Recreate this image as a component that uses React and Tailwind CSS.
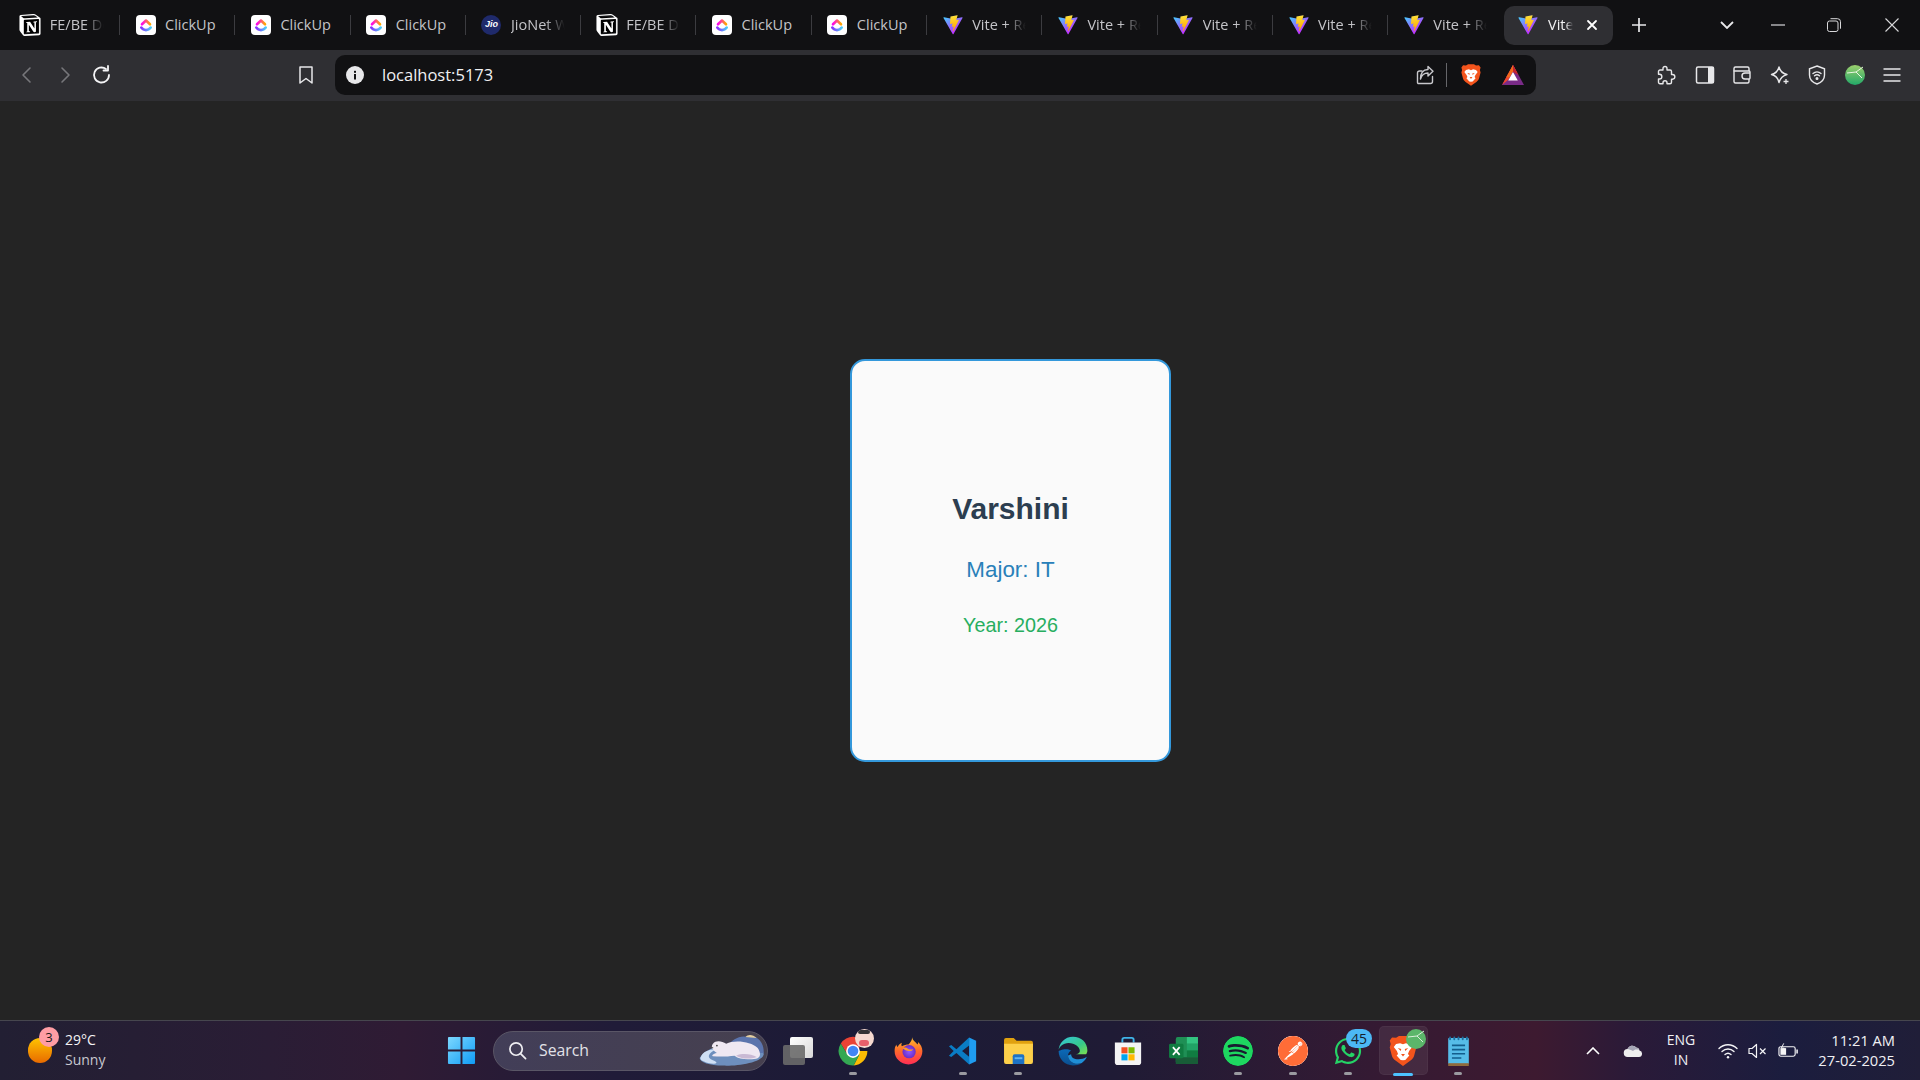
import React from "react";
import { SiNotion, SiSpotify, SiPostman } from "react-icons/si";
import { FaWhatsapp } from "react-icons/fa";

const uiFont = "font-['Open_Sans','Noto_Sans',sans-serif]";

function Vite({ id }) {
  return (
    <svg viewBox="0 0 410 404" className="w-5 h-5 shrink-0">
      <defs>
        <linearGradient id={id + "a"} x1="6" y1="33" x2="235" y2="344" gradientUnits="userSpaceOnUse">
          <stop stopColor="#41D1FF" />
          <stop offset="1" stopColor="#BD34FE" />
        </linearGradient>
        <linearGradient id={id + "b"} x1="194.65" y1="8.8" x2="236.08" y2="292.99" gradientUnits="userSpaceOnUse">
          <stop stopColor="#FFEA83" />
          <stop offset="0.083" stopColor="#FFDD35" />
          <stop offset="1" stopColor="#FFA800" />
        </linearGradient>
      </defs>
      <path d="M399.641 59.5246L215.643 388.545C211.844 395.338 202.084 395.378 198.228 388.618L10.5817 59.5563C6.38087 52.1896 12.6802 43.2665 21.0281 44.7586L205.223 77.6824C206.398 77.8924 207.601 77.8904 208.776 77.6763L389.119 44.8058C397.439 43.2894 403.768 52.1434 399.641 59.5246Z" fill={`url(#${id}a)`} />
      <path d="M292.965 1.5744L156.801 28.2552C154.563 28.6937 152.906 30.5903 152.771 32.8664L144.395 174.33C144.198 177.662 147.258 180.248 150.51 179.498L188.42 170.749C191.967 169.931 195.172 173.055 194.443 176.622L183.18 231.775C182.422 235.487 185.907 238.661 189.532 237.56L212.947 230.446C216.577 229.344 220.065 232.527 219.297 236.242L201.398 322.875C200.278 328.294 207.486 331.249 210.492 326.603L212.5 323.5L323.454 102.072C325.312 98.3645 322.108 94.137 318.036 94.9228L279.014 102.454C275.347 103.161 272.227 99.746 273.262 96.1583L298.731 7.86689C299.767 4.27314 296.636 0.855181 292.965 1.5744Z" fill={`url(#${id}b)`} />
    </svg>
  );
}

function ClickUp({ id }) {
  return (
    <svg viewBox="0 0 20 20" className="w-5 h-5 shrink-0">
      <defs>
        <linearGradient id={id + "t"} x1="0" y1="0" x2="1" y2="0">
          <stop stopColor="#ff02f0" />
          <stop offset="1" stopColor="#ffa800" />
        </linearGradient>
        <linearGradient id={id + "u"} x1="0" y1="0" x2="1" y2="0">
          <stop stopColor="#8930fd" />
          <stop offset="1" stopColor="#49ccf9" />
        </linearGradient>
      </defs>
      <rect width="20" height="20" rx="4" fill="#fff" />
      <path d="M6 9.300 10 5.500l4 3.800" fill="none" stroke={`url(#${id}t)`} strokeWidth="2.600" strokeLinecap="round" strokeLinejoin="round" />
      <path d="M5.300 12.600c1.200 1.700 2.800 2.500 4.700 2.500s3.500-.8 4.700-2.500" fill="none" stroke={`url(#${id}u)`} strokeWidth="2.600" strokeLinecap="round" />
    </svg>
  );
}

function Notion() {
  return (
    <span className="relative w-5 h-5 shrink-0 block">
      <span className="absolute left-[2px] top-[2px] w-[16px] h-[16px] bg-black rounded-[2px]" />
      <SiNotion className="absolute -left-[1px] -top-[1px] w-[22px] h-[22px] text-white" />
    </span>
  );
}

function Jio() {
  return (
    <span className="w-5 h-5 shrink-0 rounded-full bg-[#1f2a6b] flex items-center justify-center text-[9px] font-bold italic text-white font-['Liberation_Sans',sans-serif]">
      Jio
    </span>
  );
}

const tabs = [
  ["n", "FE/BE Dev Notes"],
  ["c", "ClickUp"],
  ["c", "ClickUp"],
  ["c", "ClickUp"],
  ["j", "JioNet Wi-Fi"],
  ["n", "FE/BE Dev Notes"],
  ["c", "ClickUp"],
  ["c", "ClickUp"],
  ["v", "Vite + React"],
  ["v", "Vite + React"],
  ["v", "Vite + React"],
  ["v", "Vite + React"],
  ["v", "Vite + React"],
];

function TabIcon({ kind, id }) {
  if (kind === "n") return <Notion />;
  if (kind === "c") return <ClickUp id={id} />;
  if (kind === "j") return <Jio />;
  return <Vite id={id} />;
}

function Tab({ kind, title, id, last }) {
  const titleClass =
    kind === "c"
      ? "ml-[9.5px] w-[56px] overflow-hidden whitespace-nowrap text-[14.5px] text-[#c4c4c8]"
      : "ml-[9.5px] w-[55px] overflow-hidden whitespace-nowrap text-[14.5px] text-[#c4c4c8] [mask-image:linear-gradient(to_right,black_62%,transparent_98%)]";
  return (
    <div className="w-[115.3px] h-[20px] shrink-0 flex items-center pl-[15.6px] relative">
      <TabIcon kind={kind} id={id} />
      <span className={titleClass}>{title}</span>
      {!last && <span className="absolute right-0 top-0 h-[20px] w-px bg-[#3c3c40]" />}
    </div>
  );
}

function TabBar() {
  return (
    <div className="h-[50px] bg-[#111113] flex items-center pl-[4.7px] shrink-0">
      {tabs.map((t, i) => (
        <Tab key={i} kind={t[0]} title={t[1]} id={"tab" + i} last={i === 12} />
      ))}
      <div className="w-[109px] h-[39px] rounded-[10px] bg-[#2f2f33] flex items-center pl-[14.5px] shrink-0">
        <Vite id="active" />
        <span className="ml-[10px] w-[25px] overflow-hidden whitespace-nowrap text-[14.5px] text-[#f0f0f2] [mask-image:linear-gradient(to_right,black_70%,transparent_100%)]">
          Vite + React
        </span>
        <svg viewBox="0 0 12 12" className="w-3 h-3 ml-[13px]" fill="none" stroke="#fff" strokeWidth="1.800" strokeLinecap="round">
          <path d="M2 2l8 8M10 2l-8 8" />
        </svg>
      </div>
      <svg viewBox="0 0 14 14" className="w-[14px] h-[14px] ml-[19.5px]" fill="none" stroke="#e8e8ea" strokeWidth="1.700">
        <path d="M7 0v14M0 7h14" />
      </svg>
      <svg viewBox="0 0 14 8" className="w-[14px] h-[8px] ml-[74px]" fill="none" stroke="#e8e8ea" strokeWidth="1.800">
        <path d="M1 1l6 6 6-6" />
      </svg>
      <svg viewBox="0 0 14 2" className="w-[14px] h-[2px] ml-[37px]" fill="none" stroke="#d8d8da" strokeWidth="1.200">
        <path d="M0 1h14" />
      </svg>
      <svg viewBox="0 0 14 14" className="w-[14px] h-[14px] ml-[42px]" fill="none" stroke="#d8d8da" strokeWidth="1">
        <rect x="0.500" y="3" width="10.500" height="10.500" rx="2" />
        <path d="M3.500 0.700h7a3 3 0 0 1 3 3v7" />
      </svg>
      <svg viewBox="0 0 14 14" className="w-[14px] h-[14px] ml-[44px]" fill="none" stroke="#d8d8da" strokeWidth="1.100">
        <path d="M0.500 0.500l13 13M13.500 0.500l-13 13" />
      </svg>
    </div>
  );
}

function BraveLion({ w = 20, h = 22 }) {
  return (
    <svg viewBox="0 0 24 26" className="block shrink-0" style={{ width: w, height: h }}>
      <path d="M6 1.500 8.500 0h7L18 1.500l3.500-.3L23.500 4l-.8 3 .8 3-1.800 7c-.5 1.900-1.500 3.200-3.200 4.300L12 26l-6.500-4.700c-1.700-1.100-2.700-2.400-3.200-4.300L.5 10l.8-3-.8-3L2.500 1.200z" fill="#f3541c" />
      <path d="M6 7l3.500-.8L12 7.200l2.500-1 3.500.8 2 2.500-2.700 3.500-1 2.500 1.200 1.500-3.500 3.700L12 21l-2 -.3-3.500-3.700 1.200-1.500-1-2.500L4 9.500z" fill="#fff" />
      <path d="M7.500 10.500l3 .8-.5 1.700zM16.500 10.500l-3 .8.500 1.700zM10.300 15.500h3.400L12 17.800z" fill="#f3541c" />
    </svg>
  );
}

function Bat() {
  return (
    <svg viewBox="0 0 22 20" className="w-[22px] h-[20px] shrink-0">
      <path d="M11 0 22 20H0z" fill="#7a2b88" />
      <path d="M11 0 15.500 8.200 11 6 6.500 14.500 0 20z" fill="#f0452a" />
      <path d="M11 0 4.300 12.200H7.500L11 6.200z" fill="#f26a1b" />
      <path d="M11 7 15.800 15.600H6.200z" fill="#fff" />
      <path d="M11 0l5.500 10L11 7z" fill="#c4262e" />
    </svg>
  );
}

function ToolBar() {
  return (
    <div className="h-[51px] bg-[#2f2f33] flex items-start pt-[5px] shrink-0">
      <div className="h-[40px] flex items-center shrink-0">
        <svg viewBox="0 0 20 20" className="w-5 h-5 ml-[17px]" fill="none" stroke="#77777b" strokeWidth="1.600" strokeLinecap="round" strokeLinejoin="round">
          <path d="M13 3 6 10l7 7" />
        </svg>
        <svg viewBox="0 0 20 20" className="w-5 h-5 ml-[18px]" fill="none" stroke="#77777b" strokeWidth="1.600" strokeLinecap="round" strokeLinejoin="round">
          <path d="M7 3l7 7-7 7" />
        </svg>
        <svg viewBox="0 0 20 20" className="w-5 h-5 ml-[17px]" fill="none" stroke="#f4f4f6" strokeWidth="1.800" strokeLinecap="round">
          <path d="M17 10a7.500 7.500 0 1 1-3-6" />
          <path d="M16 1v4.500h-4.500" fill="none" strokeLinejoin="round" />
        </svg>
        <svg viewBox="0 0 16 20" className="w-4 h-5 ml-[186px]" fill="none" stroke="#e8e8ea" strokeWidth="1.500" strokeLinejoin="round">
          <path d="M2 2h12v16l-6-4.500L2 18z" />
        </svg>
      </div>
      <div className="ml-[21px] w-[1201px] h-[40px] rounded-[10px] bg-[#111113] flex items-center pl-[11px] pr-[12px] shrink-0">
        <span className="w-[18px] h-[18px] rounded-full bg-[#e8e8ea] text-[#111113] flex items-center justify-center">
          <svg viewBox="0 0 18 18" className="w-[18px] h-[18px]" fill="#111113">
            <rect x="8" y="8" width="2" height="5.500" />
            <rect x="8" y="4.800" width="2" height="2" />
          </svg>
        </span>
        <span className="ml-[18px] text-[16.5px] text-[#f0f0f2]">localhost:5173</span>
        <svg viewBox="0 0 20 20" className="w-5 h-5 ml-auto" fill="none" stroke="#c8c8cc" strokeWidth="1.400" strokeLinecap="round" strokeLinejoin="round">
          <path d="M17.500 11.500v5a2 2 0 0 1-2 2H3.500a1 1 0 0 1-1-1V8a2 2 0 0 1 2-2H7" />
          <path d="M13 1.500l5 4.700-5 4.800V8c-4.500 0-6.500 2.500-7.500 6 0-6 2.500-9.500 7.500-9.500z" />
        </svg>
        <span className="ml-[11px] w-px h-[24px] bg-[#66666a]" />
        <span className="ml-[14px]"><BraveLion /></span>
        <span className="ml-[21px]"><Bat /></span>
      </div>
      <div className="h-[40px] flex items-center gap-[17.500px] ml-[121px] shrink-0">
        <svg viewBox="0 0 20 20" className="w-5 h-5" fill="none" stroke="#e8e8ea" strokeWidth="1.400" strokeLinejoin="round">
          <path d="M8 1.500a2 2 0 0 1 2 2V5h3a1.500 1.500 0 0 1 1.500 1.500v3h1a2.300 2.300 0 0 1 0 4.700h-1v3a1.500 1.500 0 0 1-1.500 1.500h-3v-1a2 2 0 0 0-4 0v1H3a1.500 1.500 0 0 1-1.500-1.500V14h1a2.300 2.300 0 0 0 0-4.700h-1V6.500A1.500 1.500 0 0 1 3 5h3V3.500a2 2 0 0 1 2-2z" />
        </svg>
        <svg viewBox="0 0 20 20" className="w-5 h-5">
          <rect x="1.500" y="2" width="17" height="16" rx="1.500" fill="none" stroke="#e8e8ea" strokeWidth="1.500" />
          <rect x="13" y="2" width="6" height="16" fill="#e8e8ea" />
        </svg>
        <svg viewBox="0 0 20 20" className="w-5 h-5" fill="none" stroke="#e8e8ea" strokeWidth="1.400" strokeLinejoin="round">
          <path d="M17 6V3.500a1.500 1.500 0 0 0-1.500-1.500H3.500A1.500 1.500 0 0 0 2 3.500v13A1.500 1.500 0 0 0 3.500 18h12a1.500 1.500 0 0 0 1.500-1.500V14" />
          <path d="M2 5.500c0 .3.500.500 1 .500h14a1 1 0 0 1 1 1v6a1 1 0 0 1-1 1h-4a3 3 0 0 1 0-6h5" />
        </svg>
        <svg viewBox="0 0 20 20" className="w-5 h-5" fill="none" stroke="#e8e8ea" strokeWidth="1.400" strokeLinejoin="round">
          <path d="M9 2c1 4 3 6.500 8 7.500-4 1-6.500 3-8 8-1-4.500-3-7-7.500-8C6 8.500 8 6 9 2z" />
          <path d="M16 14v5M13.500 16.500h5" stroke="#e8e8ea" strokeWidth="1.300" />
        </svg>
        <svg viewBox="0 0 20 20" className="w-5 h-5" fill="none" stroke="#e8e8ea" strokeWidth="1.400" strokeLinecap="round">
          <path d="M10 1l7.500 2.800V10c0 4.500-3.300 7.500-7.500 9-4.200-1.500-7.500-4.500-7.500-9V3.800z" />
          <path d="M6 8.500c2.300-2 5.700-2 8 0M7.500 10.800c1.500-1.200 3.500-1.200 5 0" />
          <circle cx="10" cy="13.500" r=".8" fill="#e8e8ea" />
        </svg>
        <svg viewBox="0 0 20 20" className="w-5 h-5">
          <defs>
            <linearGradient id="glb" x1="0" y1="0" x2="0" y2="1">
              <stop stopColor="#9ccf6e" />
              <stop offset="1" stopColor="#22a868" />
            </linearGradient>
          </defs>
          <circle cx="10" cy="10" r="10" fill="url(#glb)" />
          <path d="M2 8l9-1 7-5M11 7l6 6" fill="none" stroke="#e8f5e0" strokeWidth="1" />
        </svg>
        <svg viewBox="0 0 20 20" className="w-5 h-5" fill="none" stroke="#e8e8ea" strokeWidth="1.600">
          <path d="M1.500 4h17M1.500 10h17M1.500 16h17" />
        </svg>
      </div>
    </div>
  );
}

function Card() {
  return (
    <div className="ml-[101px] w-[321px] h-[403px] rounded-[15px] border-2 border-[#3498db] bg-[#fafafa] flex flex-col items-center justify-center pt-[7px] text-center font-['Liberation_Sans',Arial,sans-serif]">
      <h2 className="text-[30px] leading-[34px] font-bold text-[#2c3e50]">Varshini</h2>
      <p className="mt-[31.5px] text-[22.400px] leading-[26px] text-[#2980b9]">Major: IT</p>
      <p className="mt-[31px] text-[19.800px] leading-[22px] text-[#27ae60]">Year: 2026</p>
    </div>
  );
}

function Dot({ active }) {
  return active ? (
    <span className="absolute bottom-[5px] left-1/2 -translate-x-1/2 w-[20px] h-[3px] rounded-full bg-[#4cc2ff]" />
  ) : (
    <span className="absolute bottom-[6px] left-1/2 -translate-x-1/2 w-[8px] h-[3px] rounded-full bg-[#9a9aa0]" />
  );
}

function Slot({ children, dot, active }) {
  return (
    <div className="relative w-[55px] h-[60px] shrink-0 flex items-center justify-center">
      {active && <span className="absolute left-[3px] top-[5px] w-[49px] h-[49px] rounded-[5px] bg-white/[0.07] border border-white/[0.04]" />}
      <span className="relative">{children}</span>
      {dot && <Dot active={active} />}
    </div>
  );
}

function Chrome() {
  return (
    <span className="relative block w-[30px] h-[30px]">
      <svg viewBox="0 0 48 48" className="w-[30px] h-[30px]">
        <path d="M24 24 43.900 13A23 23 0 0 0 4.500 11.800L14 28z" fill="#ea4335" />
        <path d="M24 24H47a23 23 0 0 1-22 23L34 30z" fill="#fbbc04" />
        <path d="M24 47A23 23 0 0 1 4.500 11.800L14 28l10-4 10 6-9 17z" fill="#34a853" />
        <circle cx="24" cy="24" r="11" fill="#fff" />
        <circle cx="24" cy="24" r="8.500" fill="#4285f4" />
      </svg>
      <span className="absolute -right-[6px] -top-[7px] w-[19px] h-[19px] rounded-full bg-[#f5d9cf] overflow-hidden">
        <span className="absolute left-[3px] top-[1px] w-[12px] h-[4px] rounded-full bg-[#333]" />
        <span className="absolute left-[4px] bottom-[2px] w-[10px] h-[6px] rounded-sm bg-[#e8606b]" />
      </span>
    </span>
  );
}

function Firefox() {
  return (
    <svg viewBox="0 0 48 48" className="w-[29px] h-[29px]">
      <defs>
        <linearGradient id="ff1" x1="0" y1="0" x2="0" y2="1">
          <stop stopColor="#ffbd2e" />
          <stop offset=".5" stopColor="#ff6a2b" />
          <stop offset="1" stopColor="#ff2d55" />
        </linearGradient>
        <radialGradient id="ff2">
          <stop stopColor="#9059ff" />
          <stop offset="1" stopColor="#6b2dc5" />
        </radialGradient>
      </defs>
      <path d="M30 2c1 6 5 7 9 12 1-1 1-3 1-4 4 4 7 9 7 15 0 12-10 22-23 22S1 37 1 25c0-5 1-8 3-11 0 2 1 3 2 4 1-3 4-6 7-7-1 3-1 4 0 6 3-2 8-3 11-3 3-3 6-7 6-12z" fill="url(#ff1)" />
      <circle cx="25" cy="26" r="11" fill="url(#ff2)" />
      <path d="M14 20c3-2 7-1 9 1s7 2 9 0c-1 3-4 4-7 4-4 0-8-2-11-5z" fill="#ff9a2e" />
    </svg>
  );
}

function VsCode() {
  return (
    <svg viewBox="0 0 32 32" className="w-[30px] h-[30px]">
      <path d="M22.500 1.500V10L15 16l7.500 6v8.500L9 18l-5.500 4.500L1 21l5-5-5-5 2.500-1.500L9 14z" fill="#0a7cc4" />
      <path d="M22.500 1.500 30 5v22l-7.500 3.500z" fill="#1f9cf0" />
    </svg>
  );
}

function Explorer() {
  return (
    <svg viewBox="0 0 32 28" className="w-[31px] h-[27px]">
      <path d="M1 3a2 2 0 0 1 2-2h8l3 3h15a2 2 0 0 1 2 2v4H1z" fill="#e0a10f" />
      <path d="M1 7h30v19a2 2 0 0 1-2 2H3a2 2 0 0 1-2-2z" fill="#fdd04a" />
      <path d="M10 20a2 2 0 0 1 2-2h8a2 2 0 0 1 2 2v8H10z" fill="#1d72c4" />
      <rect x="12" y="21" width="8" height="2" fill="#62b5ef" />
    </svg>
  );
}

function Edge() {
  return (
    <svg viewBox="0 0 48 48" className="w-[30px] h-[30px]">
      <defs>
        <linearGradient id="ed1" x1="0" y1="0" x2="1" y2="1">
          <stop stopColor="#36c4dd" />
          <stop offset=".6" stopColor="#36c98a" />
          <stop offset="1" stopColor="#7ee04f" />
        </linearGradient>
        <linearGradient id="ed2" x1="0" y1="0" x2="0" y2="1">
          <stop stopColor="#0c6ab8" />
          <stop offset="1" stopColor="#0a4f8f" />
        </linearGradient>
      </defs>
      <path d="M24 1C11 1 1 11 1 24c0-7 7-13 16-13 10 0 18 6 18 13 0 3-3 5-7 5h17c1-2 2-3 2-6C47 10 37 1 24 1z" fill="url(#ed1)" />
      <path d="M1 24c0 13 10 23 23 23 5 0 10-1 14-4-10 4-22-2-22-12 0-3 2-6 5-8-9-5-20 1-20 1z" fill="url(#ed2)" />
      <path d="M16 31c0 10 12 16 22 12 4-3 7-6 8-10-4 3-9 4-13 4-8 0-12-3-12-8z" fill="#1f8fd6" />
    </svg>
  );
}

function Store() {
  return (
    <svg viewBox="0 0 32 32" className="w-[30px] h-[30px]">
      <path d="M10 7V4a2 2 0 0 1 2-2h8a2 2 0 0 1 2 2v3" fill="none" stroke="#3fb4e8" strokeWidth="2" />
      <path d="M2 7h28v21a3 3 0 0 1-3 3H5a3 3 0 0 1-3-3z" fill="#f4f4f4" />
      <rect x="9" y="12" width="6.500" height="6.500" fill="#f25022" />
      <rect x="16.500" y="12" width="6.500" height="6.500" fill="#7fba00" />
      <rect x="9" y="19.500" width="6.500" height="6.500" fill="#00a4ef" />
      <rect x="16.500" y="19.500" width="6.500" height="6.500" fill="#ffb900" />
    </svg>
  );
}

function Excel() {
  return (
    <svg viewBox="0 0 30 28" className="w-[29px] h-[27px]">
      <rect x="7" y="0" width="23" height="28" rx="2" fill="#1f8f55" />
      <rect x="18.500" y="0" width="11.500" height="7" fill="#33c481" />
      <rect x="18.500" y="7" width="11.500" height="7" fill="#21a366" />
      <rect x="18.500" y="14" width="11.500" height="7" fill="#107c41" />
      <rect x="7" y="21" width="23" height="7" fill="#185c37" />
      <rect x="0" y="7" width="15" height="15" rx="1.500" fill="#107c41" />
      <path d="M4 10.500l7 8M11 10.500l-7 8" stroke="#fff" strokeWidth="1.800" />
    </svg>
  );
}

function Notepad() {
  return (
    <svg viewBox="0 0 24 32" className="w-[23px] h-[30px]">
      <rect x="1" y="2" width="22" height="28" rx="1" fill="#56bce8" />
      <rect x="1" y="29" width="22" height="3" fill="#8f6a3d" />
      <path d="M3 1.500v2M7.500 1.500v2M12 1.500v2M16.500 1.500v2M21 1.500v2" stroke="#1e6f9f" strokeWidth="2" strokeLinecap="round" />
      <path d="M5 10h14M5 14.500h14M5 19h14M5 23.500h10" stroke="#135d8c" strokeWidth="1.700" />
    </svg>
  );
}

function Bear() {
  return (
    <svg viewBox="15 30 205 105" className="w-[68px] h-[35px] shrink-0">
      <path d="M20 105C40 70 100 60 150 70c40 5 65 10 63 25-8 25-83 35-123 33-40 0-70-10-70-23z" fill="#6e8fbd" />
      <path d="M100 70c20-20 40-35 65-28 25-7 50 13 48 48l-63 0z" fill="#5b74ad" />
      <path d="M158 42c7-9 22-9 34 3z" fill="#e5cfa0" />
      <path d="M22 105c8-25 38-27 48-25-25 8-30 25-10 32 25 10 0 13-15 8-15-5-23-8-23-15z" fill="#cfe0f5" />
      <path d="M60 62c10-12 28-7 40 0 25-12 75-7 95 13 10 15 10 30-5 32-25 3-50 3-65-9-20 2-35 4-65 2-5-2 0-8 12-10-12-8-20-18-12-28z" fill="#efe8f2" />
      <path d="M130 98c20-8 45-5 62 4-20 8-45 6-62-4z" fill="#c9b9d4" />
      <circle cx="72" cy="68" r="2.500" fill="#333" />
      <circle cx="59" cy="74" r="2" fill="#555" />
    </svg>
  );
}

function TaskBar() {
  return (
    <div className={`h-[60px] shrink-0 border-t border-[#46464e] flex items-center bg-[linear-gradient(90deg,#221f33_0%,#2a1d35_14%,#2f1b34_21%,#201b38_32%,#1c1b36_45%,#1f1b35_58%,#351a33_72%,#3d1a30_80%,#2a1a38_85%,#1b1d3e_93%,#201e38_100%)] ${uiFont}`}>
      <div className="w-[434px] h-full shrink-0 flex items-center pl-[28px]">
        <span className="relative block w-[24px] h-[25px] rounded-full bg-[linear-gradient(180deg,#ffc400,#e86a00)]">
          <span className="absolute left-[11px] -top-[11px] w-[20px] h-[20px] rounded-full bg-[#ff9da4] text-[13px] leading-[20px] text-center text-[#1a1a1a]">3</span>
        </span>
        <div className="ml-[13px] mb-[2px] flex flex-col text-[14px] leading-[20px]">
          <span className="text-[#f4f4f6]">29°C</span>
          <span className="text-[#c8c8d0]">Sunny</span>
        </div>
      </div>
      <Slot>
        <svg viewBox="0 0 30 30" className="w-[29px] h-[29px]">
          <defs>
            <linearGradient id="win" x1="0" y1="0" x2="1" y2="1">
              <stop stopColor="#7dd8ff" />
              <stop offset="1" stopColor="#0f9bf5" />
            </linearGradient>
          </defs>
          <path d="M1 2a1 1 0 0 1 1-1h12v13H1zM16 1h12a1 1 0 0 1 1 1v12H16zM1 16h13v13H2a1 1 0 0 1-1-1zM16 16h13v12a1 1 0 0 1-1 1H16z" fill="url(#win)" />
        </svg>
      </Slot>
      <div className="ml-[4px] w-[275px] h-[40px] rounded-full bg-[linear-gradient(90deg,#423e58,#46404f)] border border-[#5a5666] flex items-center pl-[14px] pr-[1px] shrink-0">
        <svg viewBox="0 0 20 20" className="w-[19px] h-[19px]" fill="none" stroke="#eeeef2" strokeWidth="1.800" strokeLinecap="round">
          <circle cx="8.500" cy="8.500" r="6.500" />
          <path d="M13.500 13.500l5 5" />
        </svg>
        <span className="ml-[12px] text-[15.800px] text-[#e2e2e8]">Search</span>
        <span className="ml-auto"><Bear /></span>
      </div>
      <div className="ml-[2.500px] flex shrink-0">
        <Slot>
          <span className="relative block w-[30px] h-[28px]">
            <span className="absolute right-0 top-0 w-[23px] h-[21px] rounded-[2px] bg-[linear-gradient(135deg,#ffffff,#d8d8d8)]" />
            <span className="absolute left-0 bottom-0 w-[22px] h-[20px] rounded-[2px] bg-[#6a6a6a]/90" />
          </span>
        </Slot>
        <Slot dot><Chrome /></Slot>
        <Slot><Firefox /></Slot>
        <Slot dot><VsCode /></Slot>
        <Slot dot><Explorer /></Slot>
        <Slot><Edge /></Slot>
        <Slot><Store /></Slot>
        <Slot><Excel /></Slot>
        <Slot dot>
          <span className="block w-[28px] h-[28px] rounded-full bg-[#1ed760] relative">
            <SiSpotify className="absolute -inset-[1px] w-[30px] h-[30px] text-[#1ed760] bg-[#191a30] rounded-full" />
          </span>
        </Slot>
        <Slot dot>
          <span className="w-[30px] h-[30px] rounded-full bg-[#ff6c37] flex items-center justify-center">
            <SiPostman className="w-[30px] h-[30px] text-[#ff6c37] bg-white rounded-full" />
          </span>
        </Slot>
        <Slot dot>
          <span className="relative block w-[30px] h-[30px]">
            <FaWhatsapp className="w-[30px] h-[30px] text-[#25d366]" />
            <span className="absolute -right-[9px] -top-[7px] w-[26px] h-[19px] rounded-full bg-[#4cb8f5] text-[14px] leading-[19px] text-center text-[#16202c]">45</span>
          </span>
        </Slot>
        <Slot dot active>
          <span className="relative block w-[28px] h-[30px]">
            <BraveLion w={28} h={30} />
            <svg viewBox="0 0 20 20" className="absolute -right-[9px] -top-[7px] w-5 h-5">
              <circle cx="10" cy="10" r="10" fill="#5bb66a" />
              <path d="M2 8l9-1 7-5M11 7l6 6" fill="none" stroke="#d9efd9" strokeWidth="1" />
            </svg>
          </span>
        </Slot>
        <Slot dot><Notepad /></Slot>
      </div>
      <svg viewBox="0 0 14 8" className="w-[14px] h-[8px] ml-[100.500px] shrink-0" fill="none" stroke="#fff" strokeWidth="1.600">
        <path d="M1 7l6-6 6 6" />
      </svg>
      <svg viewBox="0 0 20 14" className="w-[20px] h-[14px] ml-[23px] shrink-0">
        <path d="M5 13a4 4 0 0 1-.5-8A5 5 0 0 1 13 3.500 3.500 3.500 0 0 1 16.500 6.500 3.300 3.300 0 0 1 16 13z" fill="#eeeeee" />
        <path d="M4.500 5A5 5 0 0 1 13 3.500 3.500 3.500 0 0 1 16 6c-3-1-5 0-6 1-2-1.500-4-1.500-5.500-2z" fill="#a5a5b5" />
      </svg>
      <div className="ml-[22px] w-[32px] mb-[1px] flex flex-col items-center text-[14px] leading-[20px] text-[#f0f0f4] shrink-0">
        <span>ENG</span>
        <span>IN</span>
      </div>
      <svg viewBox="0 0 20 16" className="w-[20px] h-[16px] ml-[21px] shrink-0" fill="none" stroke="#f4f4f6" strokeWidth="1.400" strokeLinecap="round">
        <path d="M1 5.500c5-5 13-5 18 0M4 8.500c3.500-3.300 8.500-3.300 12 0M7 11.500c1.700-1.500 4.300-1.500 6 0" />
        <circle cx="10" cy="14.300" r="1.200" fill="#f4f4f6" stroke="none" />
      </svg>
      <svg viewBox="0 0 20 16" className="w-[20px] h-[16px] ml-[10px] shrink-0" fill="none" stroke="#f4f4f6" strokeWidth="1.200" strokeLinejoin="round">
        <path d="M1 5.500h3l4.500-4v13L4 10.500H1z" />
        <path d="M12 5.500l5.500 5.500M17.500 5.500L12 11" />
      </svg>
      <svg viewBox="0 0 22 16" className="w-[21px] h-[16px] ml-[10px] shrink-0" fill="none" stroke="#f4f4f6" strokeWidth="1.200">
        <rect x="1" y="3.500" width="17" height="10" rx="2" />
        <path d="M20 6.500v4" strokeWidth="1.600" />
        <path d="M2.500 5h6v7h-6z" fill="#f4f4f6" stroke="none" />
        <path d="M6 0L3.500 5h3L5 9" stroke="#f4f4f6" strokeWidth="1" />
      </svg>
      <div className="ml-auto pr-[25px] mb-[2px] flex flex-col items-end text-[14.700px] leading-[20px] text-[#f0f0f4] shrink-0">
        <span>11:21 AM</span>
        <span>27-02-2025</span>
      </div>
    </div>
  );
}

export default function App() {
  return (
    <div className={`w-[1920px] h-[1080px] overflow-hidden flex flex-col bg-[#242424] ${uiFont}`}>
      <TabBar />
      <ToolBar />
      <main className="flex-1 flex items-center justify-center">
        <Card />
      </main>
      <TaskBar />
    </div>
  );
}
